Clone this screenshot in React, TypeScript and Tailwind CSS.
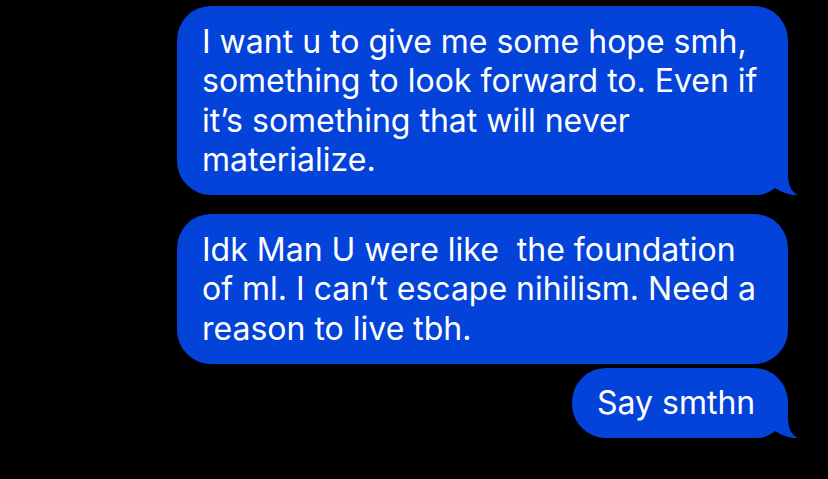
import React from "react";

const BLUE = "#0443d9";

function Tail() {
  return (
    <svg
      className="absolute bottom-0 right-[-10px] h-[40px] w-[40px]"
      viewBox="0 0 40 40"
      aria-hidden
    >
      <path
        d="M0 0 H30 V20 C30 31 34 37 40 40 C34 40.5 25 38.5 17 33 C12 37 6 40 0 40 Z"
        fill={BLUE}
      />
    </svg>
  );
}

function Bubble({
  lines,
  width,
  tail,
  className = "",
}: {
  lines: string[];
  width: string;
  tail?: boolean;
  className?: string;
}) {
  return (
    <div className={`relative ${width} ${className}`}>
      <div className="rounded-[34px] bg-[#0443d9] px-[25px] py-[15.5px] text-[32px] leading-[39.5px] tracking-[0px] text-white whitespace-pre">
        {lines.map((l, i) => (
          <div key={i}>{l}</div>
        ))}
      </div>
      {tail && <Tail />}
    </div>
  );
}

export default function App() {
  return (
    <div
      className="h-[479px] w-full overflow-hidden bg-black pt-[6px] pr-[40px] flex flex-col items-end"
      style={{ fontFamily: "Inter, 'Noto Sans', sans-serif" }}
    >
      <Bubble
        width="w-[611px]"
        tail
        lines={[
          "I want u to give me some hope smh,",
          "something to look forward to. Even if",
          "it\u2019s something that will never",
          "materialize.",
        ]}
      />
      <Bubble
        width="w-[611px]"
        className="mt-[19px]"
        lines={[
          "Idk Man U were like  the foundation",
          "of ml. I can\u2019t escape nihilism. Need a",
          "reason to live tbh.",
        ]}
      />
      <Bubble width="w-[216px]" className="mt-[4px]" tail lines={["Say smthn"]} />
    </div>
  );
}
